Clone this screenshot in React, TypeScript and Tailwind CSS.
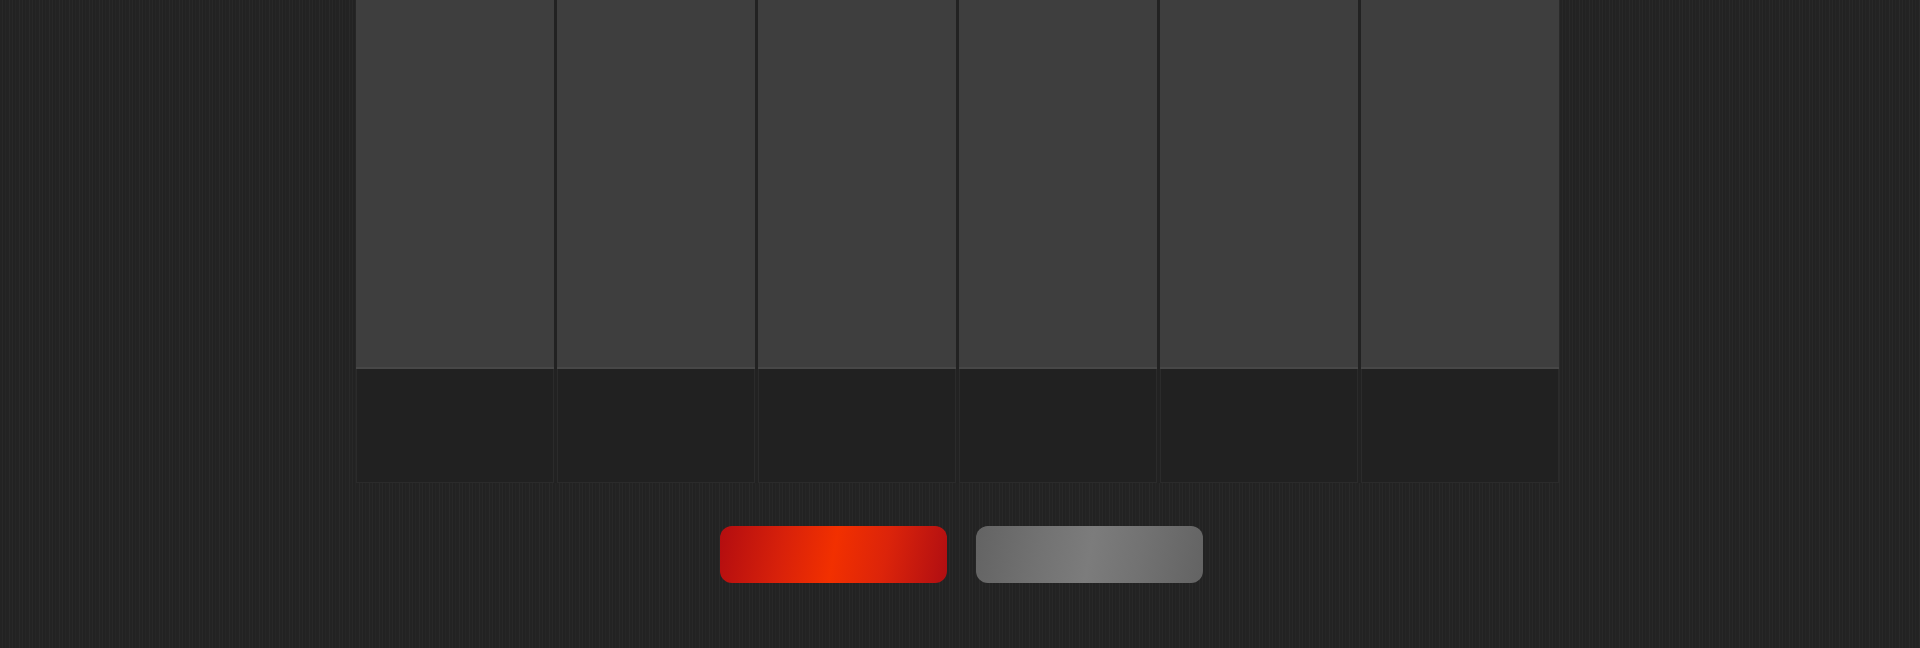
export default function App() {
  const columns = [0, 1, 2, 3, 4, 5];

  return (
    <div className="h-[648px] w-full overflow-hidden bg-[#232323] bg-[repeating-linear-gradient(90deg,#232323_0px,#232323_2px,#282828_2px,#282828_3px,#222222_3px,#222222_5px,#262626_5px,#262626_6px,#232323_6px,#232323_9px,#2a2a2a_9px,#2a2a2a_10px)]">
      <div className="ml-[356px] w-[1203px]">
        <div className="flex gap-[3px] bg-[#222222]">
          {columns.map((c) => (
            <div key={c} className="flex w-[198px] flex-col">
              <div className="h-[369px] border-b-2 border-[#474747] bg-[#3e3e3e]" />
              <div className="h-[114px] border-x border-b border-[#2b2b2b] bg-[#212121]" />
            </div>
          ))}
        </div>

        <div className="ml-[364px] mt-[43px] flex gap-[29px]">
          <button
            type="button"
            className="h-[57px] w-[227px] rounded-[12px] bg-[linear-gradient(100deg,#b30d10_0%,#d8210a_28%,#f23000_50%,#dc240a_72%,#b00e12_100%)]"
            aria-label="Primary"
          />
          <button
            type="button"
            className="h-[57px] w-[227px] rounded-[12px] bg-[linear-gradient(100deg,#636363_0%,#727272_28%,#7c7c7c_50%,#727272_72%,#636363_100%)]"
            aria-label="Secondary"
          />
        </div>
      </div>
    </div>
  );
}
